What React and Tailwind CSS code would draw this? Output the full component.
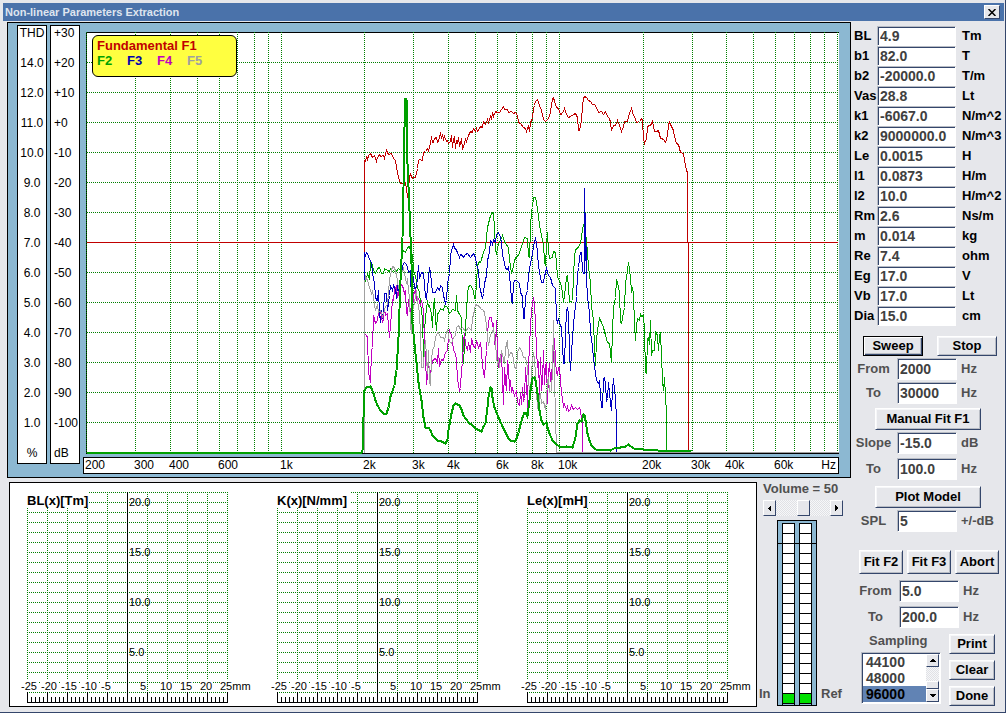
import React, { useState } from 'react';

const THD_SCALE = ['THD', '14.0', '12.0', '11.0', '10.0', '9.0', '8.0', '7.0', '6.0', '5.0', '4.0', '3.0', '2.0', '1.0', '%'];
const DB_SCALE = ['+30', '+20', '+10', '+0', '-10', '-20', '-30', '-40', '-50', '-60', '-70', '-80', '-90', '-100', 'dB'];

const FREQ_LABELS = [
  { hz: 200, text: '200' },
  { hz: 300, text: '300' },
  { hz: 400, text: '400' },
  { hz: 600, text: '600' },
  { hz: 1000, text: '1k' },
  { hz: 2000, text: '2k' },
  { hz: 3000, text: '3k' },
  { hz: 4000, text: '4k' },
  { hz: 6000, text: '6k' },
  { hz: 8000, text: '8k' },
  { hz: 10000, text: '10k' },
  { hz: 20000, text: '20k' },
  { hz: 30000, text: '30k' },
  { hz: 40000, text: '40k' },
  { hz: 60000, text: '60k' },
];

const PARAMS = [
  { name: 'BL', value: '4.9', unit: 'Tm' },
  { name: 'b1', value: '82.0', unit: 'T' },
  { name: 'b2', value: '-20000.0', unit: 'T/m' },
  { name: 'Vas', value: '28.8', unit: 'Lt' },
  { name: 'k1', value: '-6067.0', unit: 'N/m^2' },
  { name: 'k2', value: '9000000.0', unit: 'N/m^3' },
  { name: 'Le', value: '0.0015', unit: 'H' },
  { name: 'l1', value: '0.0873', unit: 'H/m' },
  { name: 'l2', value: '10.0', unit: 'H/m^2' },
  { name: 'Rm', value: '2.6', unit: 'Ns/m' },
  { name: 'm', value: '0.014', unit: 'kg' },
  { name: 'Re', value: '7.4', unit: 'ohm' },
  { name: 'Eg', value: '17.0', unit: 'V' },
  { name: 'Vb', value: '17.0', unit: 'Lt' },
  { name: 'Dia', value: '15.0', unit: 'cm' },
];

// Sweep traces, in plot units (x 86-839, y 32-454)
const F1 = '364,452 364,160 365,161 366,157 367,159 368,155 370,153 371,155 372,157 374,155 376,161 377,157 379,154 380,156 383,155 384,158 385,153 386,150 388,154 391,153 393,158 395,160 396,167 398,177 400,183 403,183 405,182 406,188 407,197 408,190 409,176 410,174 412,178 413,177 415,177 417,168 418,160 419,159 422,160 423,152 425,151 427,148 428,150 430,143 431,136 432,142 433,142 434,138 436,137 437,142 438,141 440,132 441,138 442,134 443,139 444,136 446,141 447,140 448,143 450,141 451,135 452,147 453,139 454,137 455,148 456,140 457,143 458,137 459,146 460,143 461,138 462,148 463,146 465,139 466,141 468,135 470,131 472,132 473,128 475,131 476,128 477,131 479,128 480,126 482,127 483,121 485,124 487,119 488,122 490,116 491,119 492,112 493,116 495,111 497,112 499,112 501,109 503,106 504,109 507,109 508,112 511,111 513,113 515,112 517,115 518,122 520,123 523,127 525,128 526,131 528,125 529,131 530,122 532,118 533,108 534,105 535,101 537,99 539,105 541,110 543,119 545,121 547,119 549,116 551,105 552,98 553,97 554,101 556,107 558,108 560,114 562,113 564,108 566,114 568,117 570,116 573,114 575,113 577,117 578,130 579,130 580,125 581,120 582,105 583,98 584,96 586,97 588,100 590,101 592,104 594,104 596,107 598,112 601,111 603,114 605,111 607,116 609,118 610,122 611,130 613,125 615,125 617,120 619,125 621,131 623,126 624,121 627,121 629,113 631,108 633,115 634,116 636,122 639,121 641,118 642,120 643,138 644,143 646,138 647,127 648,125 650,125 652,121 653,126 654,131 656,131 658,130 660,138 661,138 663,139 665,142 667,135 668,124 669,122 671,126 673,130 674,136 676,143 678,144 680,152 683,153 684,160 686,170 687,172 687,242 688,243 688,452';
const F2 = '364,452 364,282 366,278 367,273 369,279 370,262 371,262 373,270 375,273 377,268 379,267 381,273 383,273 384,268 387,270 389,271 390,268 392,271 393,270 395,272 398,268 400,270 401,257 403,250 405,252 407,247 409,246 410,250 412,255 413,270 415,276 417,287 419,292 420,303 422,318 423,357 424,330 425,317 427,300 428,306 429,305 431,314 432,327 433,305 434,298 435,318 436,330 437,313 438,313 440,308 443,310 444,305 447,307 449,313 450,312 452,309 455,310 456,295 457,310 459,314 461,317 462,350 463,363 464,345 465,327 467,293 468,286 470,285 473,290 474,298 475,298 477,265 479,261 480,262 483,252 485,247 486,237 487,227 489,219 490,215 492,212 493,214 494,227 495,250 496,253 498,243 500,240 502,235 504,241 505,243 508,247 509,259 511,273 513,266 514,260 516,256 518,255 521,246 523,240 524,237 527,238 528,256 529,257 530,227 531,210 532,207 533,197 535,197 537,208 539,224 540,230 542,240 543,243 544,262 545,265 546,245 547,232 548,250 549,258 552,257 553,251 555,252 556,262 557,277 560,282 562,292 563,302 565,287 566,276 567,275 568,287 569,302 572,300 573,275 574,257 575,249 577,248 580,243 581,236 583,224 584,225 586,240 587,253 588,266 590,283 591,306 593,320 594,348 595,365 596,340 597,330 599,318 601,322 603,327 605,335 607,342 609,343 610,352 611,362 612,330 613,307 615,297 616,279 618,286 619,292 620,322 621,323 623,312 624,307 625,283 626,277 627,270 628,262 630,277 631,292 632,287 633,293 634,325 635,340 636,325 637,318 639,320 640,314 641,316 643,315 644,330 645,372 646,373 647,338 648,337 649,344 650,320 651,355 652,350 654,350 655,331 656,332 657,336 658,350 659,335 660,333 661,355 662,380 663,390 664,377 665,395 666,413 666,452';
const F3 = '364,452 364,252 365,255 366,252 367,253 369,259 371,262 372,273 374,283 375,296 376,300 377,300 378,290 379,312 380,322 381,310 382,318 383,310 384,293 386,293 387,310 389,295 390,285 392,290 393,285 395,289 396,298 397,284 398,290 400,282 402,265 404,262 405,263 407,266 408,272 410,270 411,302 412,282 413,277 414,288 416,287 417,276 418,265 419,278 421,272 423,273 424,284 425,296 426,298 428,277 429,267 430,271 431,283 432,292 435,292 437,287 439,290 440,285 442,287 443,295 445,303 446,300 447,283 449,273 450,256 451,250 453,244 454,248 455,248 457,252 459,257 460,254 462,255 463,257 465,254 467,253 470,257 473,253 475,257 476,264 478,270 479,284 480,290 482,298 483,293 484,283 486,275 487,260 489,252 490,240 491,241 492,244 493,239 495,242 496,234 498,232 500,237 501,242 502,255 504,262 505,268 507,269 508,266 510,285 511,300 512,302 513,283 514,280 516,280 519,283 520,292 522,296 523,318 524,318 525,296 527,290 528,274 530,263 532,253 534,241 535,238 536,242 537,253 538,266 540,277 541,282 543,282 544,276 546,268 548,275 550,277 552,285 555,288 556,318 557,322 558,319 560,325 561,327 562,345 563,363 564,363 565,333 566,310 567,307 568,314 569,352 570,370 571,352 572,337 574,313 575,307 576,296 577,274 578,267 579,258 580,252 581,252 582,270 583,273 584,273 584,188 585,260 585,213 586,277 587,297 589,312 590,333 591,337 593,358 595,373 596,380 598,383 599,381 601,407 602,407 603,378 604,377 605,384 606,400 607,398 608,382 610,403 611,410 612,390 613,378 614,390 615,397 616,420 616,452';
const F4 = '364,425 364,333 366,335 367,337 368,372 370,382 371,350 372,347 373,315 375,323 377,320 378,312 380,310 382,322 383,318 384,308 385,315 387,313 388,326 389,337 391,313 392,299 393,300 394,290 396,285 397,297 398,293 400,284 402,285 404,293 405,290 406,312 407,315 408,299 409,298 410,317 412,312 413,294 415,290 416,300 418,298 420,305 421,300 423,310 424,344 425,357 426,384 427,375 428,360 429,375 430,382 431,358 432,362 433,359 435,358 437,362 438,348 439,366 441,359 443,360 445,352 447,350 448,336 449,330 451,335 452,340 453,350 455,353 456,360 457,378 459,390 460,388 461,368 462,363 463,340 464,333 465,344 467,350 468,342 470,352 471,338 473,346 475,347 476,340 478,347 480,343 481,350 482,366 484,377 485,362 486,350 487,333 488,322 489,317 491,317 492,326 493,323 494,342 495,347 496,320 497,352 498,367 500,355 501,353 502,380 503,404 504,367 505,380 506,390 507,360 508,367 509,390 510,380 511,392 512,388 514,395 516,390 517,402 519,405 520,392 521,404 522,387 523,400 524,398 525,367 526,382 527,407 528,364 529,347 530,325 531,310 532,303 533,297 534,303 535,323 536,350 537,367 538,361 539,394 540,357 541,390 542,380 543,350 544,384 545,365 546,362 547,403 548,373 549,363 550,380 551,383 552,355 553,362 554,338 555,361 556,372 557,375 558,367 559,367 560,380 561,393 562,398 563,407 564,404 566,409 567,406 568,411 570,409 571,405 573,409 575,407 577,409 579,407 580,410 581,419 582,421 582,452';
const F5 = '364,452 364,283 365,276 367,280 369,287 371,293 372,290 374,304 375,310 377,304 378,312 380,310 382,316 383,313 385,306 387,304 388,292 389,279 391,270 392,266 394,267 396,275 397,280 398,288 400,279 401,273 403,268 405,278 406,283 407,278 408,290 409,297 410,325 411,333 412,310 413,307 415,296 416,290 417,300 419,313 420,333 421,367 423,367 424,347 425,340 426,357 427,373 428,350 429,381 430,385 431,360 432,350 434,345 435,337 437,332 438,332 440,337 443,337 444,340 446,332 447,330 449,341 451,343 453,337 455,335 456,327 458,325 460,329 462,327 465,331 468,327 471,330 472,318 474,310 475,304 477,305 479,306 480,308 483,310 484,312 486,324 487,337 488,345 490,334 492,332 493,327 494,338 495,343 496,355 497,365 498,357 499,367 501,350 503,359 504,363 505,348 507,340 508,357 510,352 512,353 514,367 516,368 517,352 519,347 521,350 523,357 525,357 527,367 528,381 529,390 530,393 531,370 533,352 534,358 536,390 537,408 538,407 539,397 540,393 541,403 543,401 545,409 546,400 547,380 548,377 549,392 551,390 552,370 553,320 554,380 555,413 556,452 838,452';
const THD = '86,452 361,452 362,450 363,417 364,390 366,387 370,386 371,388 373,393 375,400 377,405 380,410 383,413 386,413 388,407 390,396 391,393 394,385 395,376 396,370 398,337 400,280 402,237 403,187 404,127 405,98 406,98 407,163 409,210 411,263 412,323 415,353 418,382 421,400 423,417 425,427 428,427 430,430 432,435 437,440 441,441 445,443 447,439 448,430 450,419 451,413 453,405 455,403 459,405 461,409 463,415 468,422 472,425 475,428 481,431 483,426 485,423 487,407 488,397 490,387 491,388 492,397 494,407 498,417 503,428 508,438 510,440 514,441 516,438 518,432 520,424 522,417 524,412 525,412 527,416 529,400 530,390 532,378 534,377 535,380 537,393 539,410 541,420 543,424 546,422 547,427 549,433 552,440 555,443 560,447 566,446 572,447 575,437 577,423 579,420 581,421 583,414 584,415 585,420 587,433 589,440 591,445 595,449 610,450 615,447 620,447 625,446 628,444 633,448 643,449 657,450 691,451';

const freqToX = (hz) => Math.round(278.3 * Math.log10(hz / 200));

const GRID_HZ = [
  200, 300, 400, 500, 600, 700, 800, 900, 1000,
  2000, 3000, 4000, 5000, 6000, 7000, 8000, 9000, 10000,
  20000, 30000, 40000, 50000, 60000, 70000, 80000, 90000,
];

const Button = ({ children, className = '', focused = false }) => (
  <button
    type="button"
    className={`flex items-center justify-center border bg-[#e6e7eb] text-[13px] leading-4 font-bold text-black whitespace-nowrap cursor-pointer ${focused
      ? 'border-black shadow-[inset_1px_1px_0_#ffffff,inset_-1px_-1px_0_#34466b,inset_-2px_-2px_0_#b8bcc4]'
      : 'border-t-white border-l-white border-r-[#34466b] border-b-[#34466b] shadow-[inset_1px_1px_0_#f6f7f9,inset_-1px_-1px_0_#b8bcc4]'
      } ${className}`}
  >
    {children}
  </button>
);

const TextInput = ({ id, value, className = '' }) => (
  <input
    id={id}
    type="text"
    defaultValue={value}
    className={`min-w-0 rounded-none border border-t-[#b8bcc4] border-l-[#b8bcc4] border-r-white border-b-white bg-white pl-[2px] text-[14px] leading-4 font-bold text-[#404040] shadow-[inset_1px_1px_0_#34466b] outline-none ${className}`}
  />
);

// label + box + unit line of the lower control block
const Field = ({ id, label, value, unit, className = '' }) => (
  <div className={`grid grid-cols-[39px_60px_1fr] items-center gap-x-1 text-[13px] leading-4 font-bold text-[#505050] ${className}`}>
    <label htmlFor={id} className="text-center">{label}</label>
    <TextInput id={id} value={value} className="h-[22px]" />
    <span>{unit}</span>
  </div>
);

const Arrow = ({ points }) => (
  <svg width="7" height="7" viewBox="0 0 7 7" shapeRendering="crispEdges">
    <polygon points={points} fill="#000" />
  </svg>
);

const Scale = ({ items, className }) => (
  <div className={`flex h-[439px] w-[30px] flex-col justify-between border border-black bg-white pb-[2px] text-[12px] leading-[15px] text-black ${className}`}>
    {items.map((item) => (
      <span key={item}>{item}</span>
    ))}
  </div>
);

const Legend = () => (
  <div className="absolute top-[3px] left-[6px] h-[42px] w-[145px] rounded-md border border-black bg-[#ffff40] px-1 pt-[2px] text-[13px] leading-[15px] font-bold">
    <p className="text-[#c00000]">Fundamental F1</p>
    <p className="grid grid-cols-[repeat(4,30px)]">
      <span className="text-[#00a000]">F2</span>
      <span className="text-[#0000b0]">F3</span>
      <span className="text-[#c000c0]">F4</span>
      <span className="text-[#a0a0a0]">F5</span>
    </p>
  </div>
);

const SweepPlot = () => (
  <div className="relative ml-[3px] bg-white">
    <svg className="block h-[422px] w-full" viewBox="86 32 753 422" preserveAspectRatio="none" shapeRendering="crispEdges" fill="none">
      <path d="M86 32.5H839M86.5 32V454M86 453.5H839M838.5 452V454" stroke="#000" />
      <g stroke="#008000" strokeDasharray="1 1">
        {GRID_HZ.map((hz) => (
          <line key={hz} x1={86.5 + freqToX(hz)} x2={86.5 + freqToX(hz)} y1="32" y2="453" />
        ))}
        <line x1="837.5" x2="837.5" y1="32" y2="453" />
        {DB_SCALE.slice(1, 14).map((db, i) => (
          <line key={db} x1="87" x2="838" y1={62.5 + i * 30} y2={62.5 + i * 30} />
        ))}
      </g>
      <path d="M87 242.5H838" stroke="#c00000" />
      <g transform="translate(0.5 0.5)">
        <polyline points={F1} stroke="#c00000" />
        <polyline points={F2} stroke="#00a000" />
        <polyline points={F3} stroke="#0000c0" />
        <polyline points={F4} stroke="#c000c0" />
        <polyline points={F5} stroke="#a0a0a0" />
        <polyline points={THD} stroke="#00a000" strokeWidth="2" />
      </g>
    </svg>
    <Legend />
  </div>
);

const FrequencyAxis = () => (
  <div className="relative mt-[3px] h-[17px] border border-black bg-white text-[12px] leading-[15px] text-black">
    {FREQ_LABELS.map(({ hz, text }) => (
      <span key={text} className="absolute top-0" style={{ left: `${((freqToX(hz) + 1) / 754) * 100}%` }}>
        {text}
      </span>
    ))}
    <span className="absolute top-0 right-[2px]">Hz</span>
  </div>
);

const DisplacementGraph = ({ title, titleWidth }) => {
  const columns = Array.from({ length: 11 }, (_, i) => 17 + i * 20);
  const rows = Array.from({ length: 22 }, (_, i) => 9 + i * 10);
  const ticks = Array.from({ length: 51 }, (_, i) => 17 + i * 4);
  const bottom = [
    ['-25', 11], ['-20', 31], ['-15', 51], ['-10', 71], ['-5', 91],
    ['5', 130], ['10', 150], ['15', 170], ['20', 190], ['25mm', 210],
  ];

  return (
    <svg width="246" height="223" viewBox="0 0 246 223" shapeRendering="crispEdges" className="shrink-0">
      <g stroke="#008000" strokeDasharray="1 1">
        {columns.map((x) => <line key={x} x1={x + 0.5} x2={x + 0.5} y1="9" y2="220" />)}
        {rows.map((y) => <line key={y} x1="17" x2="218" y1={y + 0.5} y2={y + 0.5} />)}
      </g>
      <g stroke="#000">
        <line x1="117.5" x2="117.5" y1="9" y2="220" />
        <line x1="17" x2="218" y1="219.5" y2="219.5" />
        {ticks.map((x, i) => (
          <line key={x} x1={x + 0.5} x2={x + 0.5} y1={i % 5 === 0 ? 209 : 214} y2="220" />
        ))}
      </g>
      <rect x="17" y="9" width={titleWidth} height="16" fill="#fff" />
      <g fontSize="11" fill="#000">
        <text x="17" y="22" fontSize="13" fontWeight="bold">{title}</text>
        {['20.0', '15.0', '10.0', '5.0'].map((v, i) => (
          <text key={v} x="119" y={23 + i * 50}>{v}</text>
        ))}
        {bottom.map(([v, x]) => (
          <g key={v}>
            <rect x={x} y="196" width={v.length * 6} height="12" fill="#fff" />
            <text x={x} y="207">{v}</text>
          </g>
        ))}
      </g>
    </svg>
  );
};

const Meter = ({ segments = 18 }) => (
  <div className="flex w-[13px] flex-col border border-b-0 border-black">
    {Array.from({ length: segments }, (_, i) => (
      <div key={i} className={`h-[10px] border-b border-black ${i === segments - 1 ? 'bg-[#00e000]' : 'bg-white'}`} />
    ))}
  </div>
);

const VolumePanel = () => {
  const [volume, setVolume] = useState(50);
  const step = (n) => setVolume((v) => Math.min(100, Math.max(0, v + n)));
  const arrowButton = 'flex h-4 w-[13px] items-center justify-center border border-t-white border-l-white border-r-[#34466b] border-b-[#34466b] bg-[#e6e7eb]';

  return (
    <div className="flex w-[94px] shrink-0 flex-col text-[13px] font-bold text-[#505050]">
      <label htmlFor="volume" className="pl-[6px] leading-[21px] whitespace-nowrap">Volume = {volume}</label>
      <div className="mt-[1px] ml-[6px] flex w-20">
        <button type="button" aria-label="Volume down" className={arrowButton} onClick={() => step(-1)}>
          <Arrow points="2,3 5,0 5,7" />
        </button>
        <input
          id="volume"
          type="range"
          min="0"
          max="100"
          value={volume}
          onChange={(e) => setVolume(Number(e.target.value))}
          className="m-0 h-4 w-[54px] appearance-none bg-[repeating-conic-gradient(#f6f7f9_0_25%,#e0e1e5_0_50%)] bg-size-[2px_2px] [&::-webkit-slider-thumb]:h-4 [&::-webkit-slider-thumb]:w-[13px] [&::-webkit-slider-thumb]:appearance-none [&::-webkit-slider-thumb]:border [&::-webkit-slider-thumb]:border-t-white [&::-webkit-slider-thumb]:border-l-white [&::-webkit-slider-thumb]:border-r-[#34466b] [&::-webkit-slider-thumb]:border-b-[#34466b] [&::-webkit-slider-thumb]:bg-[#e6e7eb]"
        />
        <button type="button" aria-label="Volume up" className={arrowButton} onClick={() => step(1)}>
          <Arrow points="5,3 2,0 2,7" />
        </button>
      </div>
      <div className="mt-1 flex items-end pl-[2px]">
        <span className="w-[18px] pb-1 leading-4">In</span>
        <div className="relative flex h-[186px] w-10 shrink-0 justify-center gap-1 border border-black bg-[#8cb8d2] pt-[2px]">
          <Meter />
          <Meter />
          <div className="absolute top-[22px] right-0 left-0 h-px bg-black" />
        </div>
        <span className="pb-1 pl-1 leading-4">Ref</span>
      </div>
    </div>
  );
};

const SamplingList = () => (
  <div className="flex h-[52px] w-20 border border-t-[#b8bcc4] border-l-[#b8bcc4] border-r-white border-b-white bg-white p-px shadow-[inset_1px_1px_0_#34466b]">
    <select
      id="sampling"
      size={3}
      defaultValue="96000"
      className="h-12 w-[63px] overflow-hidden rounded-none border-0 bg-white p-0 text-[14px] font-bold outline-none"
    >
      {['44100', '48000', '96000'].map((rate) => (
        <option key={rate} value={rate} className="min-h-4 p-0 pl-[3px] text-[14px] leading-4 font-bold text-[#404040] checked:bg-[linear-gradient(#6183b4,#6183b4)] checked:text-black">
          {rate}
        </option>
      ))}
    </select>
    <div className="flex flex-1 flex-col justify-between bg-[repeating-conic-gradient(#f6f7f9_0_25%,#e0e1e5_0_50%)] bg-size-[2px_2px]">
      <button type="button" aria-label="Scroll up" className="flex h-[13px] items-center justify-center border border-t-white border-l-white border-r-[#34466b] border-b-[#34466b] bg-[#e6e7eb]">
        <Arrow points="3,2 0,5 7,5 4,2" />
      </button>
      <div>
        <div className="h-2 border border-t-white border-l-white border-r-[#34466b] border-b-[#34466b] bg-[#e6e7eb]" />
        <button type="button" aria-label="Scroll down" className="flex h-[13px] w-full items-center justify-center border border-t-white border-l-white border-r-[#34466b] border-b-[#34466b] bg-[#e6e7eb]">
          <Arrow points="3,5 0,2 7,2 4,5" />
        </button>
      </div>
    </div>
  </div>
);

const ControlPanel = () => (
  <aside className="flex w-[154px] shrink-0 flex-col pt-1 pl-[3px]">
    {PARAMS.map(({ name, value, unit }) => (
      <div key={name} className="grid h-5 grid-cols-[23px_79px_1fr] items-center text-[13px] leading-4 font-bold text-black">
        <label htmlFor={`param-${name}`}>{name}</label>
        <TextInput id={`param-${name}`} value={value} className="h-5" />
        <span className="pl-[6px]">{unit}</span>
      </div>
    ))}

    <div className="mt-[10px] flex gap-[14px] pl-[9px]">
      <Button focused className="h-5 w-[60px]">Sweep</Button>
      <Button className="h-5 w-[60px]">Stop</Button>
    </div>
    <Field id="sweep-from" label="From" value="2000" unit="Hz" className="mt-[2px]" />
    <Field id="sweep-to" label="To" value="30000" unit="Hz" className="mt-[2px]" />
    <Button className="mt-1 ml-[21px] h-[22px] w-[106px]">Manual Fit F1</Button>
    <Field id="slope" label="Slope" value="-15.0" unit="dB" className="mt-[2px]" />
    <Field id="slope-to" label="To" value="100.0" unit="Hz" className="mt-1" />
    <Button className="mt-[6px] ml-[21px] h-[22px] w-[106px]">Plot Model</Button>
    <Field id="spl" label="SPL" value="5" unit="+/-dB" className="mt-[2px]" />

    <div className="mt-[18px] flex gap-1 pl-[5px]">
      <Button className="h-6 w-11">Fit F2</Button>
      <Button className="h-6 w-11">Fit F3</Button>
      <Button className="h-6 w-11">Abort</Button>
    </div>
    <Field id="fit-from" label="From" value="5.0" unit="Hz" className="mt-[6px] pl-[2px]" />
    <Field id="fit-to" label="To" value="200.0" unit="Hz" className="mt-1 pl-[2px]" />

    <div className="mt-[6px] flex gap-2 pl-[7px]">
      <div className="w-20">
        <label htmlFor="sampling" className="mb-[4px] block pl-2 text-[13px] leading-[14px] font-bold text-[#505050]">Sampling</label>
        <SamplingList />
      </div>
      <div className="flex flex-col gap-[6px]">
        <Button className="h-5 w-[46px]">Print</Button>
        <Button className="h-5 w-[46px]">Clear</Button>
        <Button className="h-5 w-[46px]">Done</Button>
      </div>
    </div>
  </aside>
);

const App = () => {
  return (
    <div className="flex min-h-screen flex-col border-r border-b border-[#34466b] bg-[#e6e7eb] font-['Liberation_Sans',Arial,sans-serif]">
      <header className="mt-[3px] mr-px ml-[3px] flex h-[18px] items-center justify-between bg-[#4a72aa] pr-1 pl-[2px]">
        <h1 className="text-[11px] leading-4 font-bold text-[#dfe5ef]">Non-linear Parameters Extraction</h1>
        <button type="button" aria-label="Close" className="flex h-[14px] w-4 items-center justify-center border border-t-white border-l-white border-r-[#34466b] border-b-[#34466b] bg-[#e6e7eb]">
          <svg width="8" height="7" viewBox="0 0 8 7" stroke="#000" strokeWidth="1.5">
            <path d="M0.5 0L7.5 7M7.5 0L0.5 7" />
          </svg>
        </button>
      </header>

      <div className="mt-px flex flex-1">
        <main className="flex min-w-0 flex-1 flex-col pl-[7px]">
          <section className="flex border border-black bg-[#8cb8d2] pt-[2px] pr-[11px] pb-[3px] pl-[9px]">
            <Scale items={THD_SCALE} className="items-center" />
            <Scale items={DB_SCALE} className="ml-[3px] items-start pl-[3px]" />
            <div className="ml-[3px] min-w-0 flex-1 pt-[7px]">
              <SweepPlot />
              <FrequencyAxis />
            </div>
          </section>

          <div className="flex">
            <section className="mt-1 ml-[2px] flex min-w-0 flex-1 justify-between border border-black bg-white">
              <DisplacementGraph title="BL(x)[Tm]" titleWidth={62} />
              <DisplacementGraph title="K(x)[N/mm]" titleWidth={73} />
              <DisplacementGraph title="Le(x)[mH]" titleWidth={62} />
            </section>
            <VolumePanel />
          </div>
        </main>
        <ControlPanel />
      </div>
    </div>
  );
};

export default App;
